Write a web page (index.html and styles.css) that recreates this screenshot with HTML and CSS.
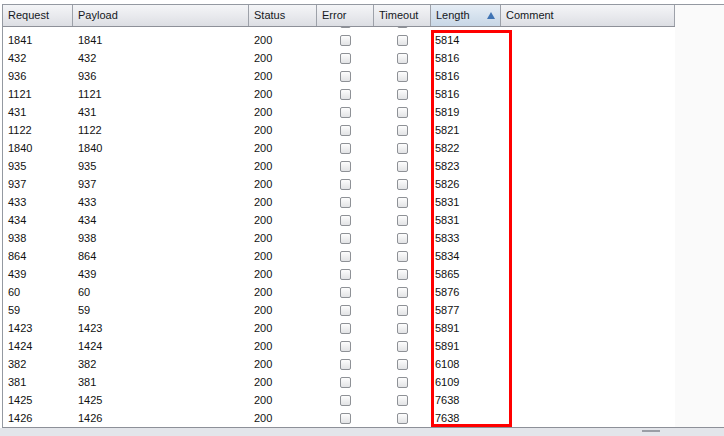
FILE: index.html
```html
<!DOCTYPE html>
<html lang="en">
<head>
    <meta charset="UTF-8">
    <title>Intruder Results</title>
    <link rel="stylesheet" href="styles.css">
</head>
<body>
<div class="frame">
    <div class="results">
        <div class="grid">
            <div class="head">
                <div class="cell c-req">Request</div>
                <div class="cell c-pay">Payload</div>
                <div class="cell c-st">Status</div>
                <div class="cell c-err">Error</div>
                <div class="cell c-to">Timeout</div>
                <div class="cell c-len sorted">Length <span class="arrow"></span></div>
                <div class="cell c-com">Comment</div>
            </div>
            <div class="body">
                <div class="rows" id="rows"></div>
            </div>
        </div>
        <div class="filler"></div>
    </div>
    <div class="hscroll"><span class="thumb"></span></div>
    <div class="highlight"></div>
</div>

<script>
    // first entry is the row scrolled up under the header, only its checkboxes peek out
    var data = [
        ['', '', ''],
        [1841, 1841, 5814], [432, 432, 5816], [936, 936, 5816], [1121, 1121, 5816],
        [431, 431, 5819], [1122, 1122, 5821], [1840, 1840, 5822], [935, 935, 5823],
        [937, 937, 5826], [433, 433, 5831], [434, 434, 5831], [938, 938, 5833],
        [864, 864, 5834], [439, 439, 5865], [60, 60, 5876], [59, 59, 5877],
        [1423, 1423, 5891], [1424, 1424, 5891], [382, 382, 6108], [381, 381, 6109],
        [1425, 1425, 7638], [1426, 1426, 7638]
    ];

    var rows = document.getElementById('rows');
    data.forEach(function (d) {
        var row = document.createElement('div');
        row.className = 'row';
        row.innerHTML =
            '<div class="cell c-req">' + d[0] + '</div>' +
            '<div class="cell c-pay">' + d[1] + '</div>' +
            '<div class="cell c-st">' + (d[0] === '' ? '' : '200') + '</div>' +
            '<div class="cell c-err"><span class="check"></span></div>' +
            '<div class="cell c-to"><span class="check"></span></div>' +
            '<div class="cell c-len">' + d[2] + '</div>' +
            '<div class="cell c-com"></div>';
        rows.appendChild(row);
    });
</script>
</body>
</html>
```

FILE: styles.css
```css
body {
    margin: 0;
    background: #fff;
    font-family: "Liberation Sans", Arial, sans-serif;
    font-size: 11px;
    color: #111;
}

.frame {
    position: relative;
    width: 724px;
    height: 436px;
    padding-top: 4px;
    box-sizing: border-box;
    overflow: hidden;
}

.results {
    display: flex;
    margin-left: 2px;
    height: 424px;
    border-top: 1px solid #9499a1;
    border-left: 1px solid #9499a1;
    border-bottom: 1px solid #8d9098;
    box-sizing: border-box;
}

.grid {
    width: 672px;
    flex: none;
    display: flex;
    flex-direction: column;
}

.filler {
    flex: 1;
    background: #fafafa;
}

.head {
    display: flex;
    height: 22px;
    flex: none;
    background: linear-gradient(#f4f5f7, #e9eaee 50%, #dcdee3);
    border-bottom: 1px solid #8d9098;
    box-sizing: border-box;
}

.head .cell {
    display: flex;
    align-items: center;
    padding-bottom: 1px;
    border-right: 1px solid #9da1a9;
    color: #15181d;
}

.head .sorted {
    background: linear-gradient(#e6edf5, #d6e2ee 50%, #c8d7e6);
}

.arrow {
    margin-left: auto;
    margin-right: 5px;
    width: 0;
    height: 0;
    border-left: 4px solid transparent;
    border-right: 4px solid transparent;
    border-bottom: 7px solid #3f74b4;
}

.cell {
    box-sizing: border-box;
    padding-left: 5px;
    white-space: nowrap;
}

.c-req { width: 70px; }
.c-pay { width: 176px; }
.c-st { width: 68px; }
.c-err { width: 57px; }
.c-to { width: 57px; }
.c-len { width: 70px; }
.c-com { width: 174px; }

.body {
    flex: 1;
    overflow: hidden;
}

.rows {
    margin-top: -14px;
}

.row {
    display: flex;
    height: 18px;
    align-items: center;
}

.row .c-err, .row .c-to {
    display: flex;
    justify-content: center;
    padding-left: 0;
}

.row .c-len {
    padding-left: 4px;
}

.check {
    display: block;
    width: 11px;
    height: 11px;
    box-sizing: border-box;
    border: 1px solid #8e9196;
    border-radius: 2px;
    background: linear-gradient(#fdfdfd, #e2e3e5);
}

.hscroll {
    position: relative;
    height: 8px;
    background: #e3e5ea;
}

.thumb {
    position: absolute;
    left: 642px;
    top: 2px;
    width: 18px;
    height: 2px;
    background: #9a9ea6;
}

.highlight {
    position: absolute;
    left: 431px;
    top: 30px;
    width: 81px;
    height: 397px;
    box-sizing: border-box;
    border: 3px solid #f00;
}
```
